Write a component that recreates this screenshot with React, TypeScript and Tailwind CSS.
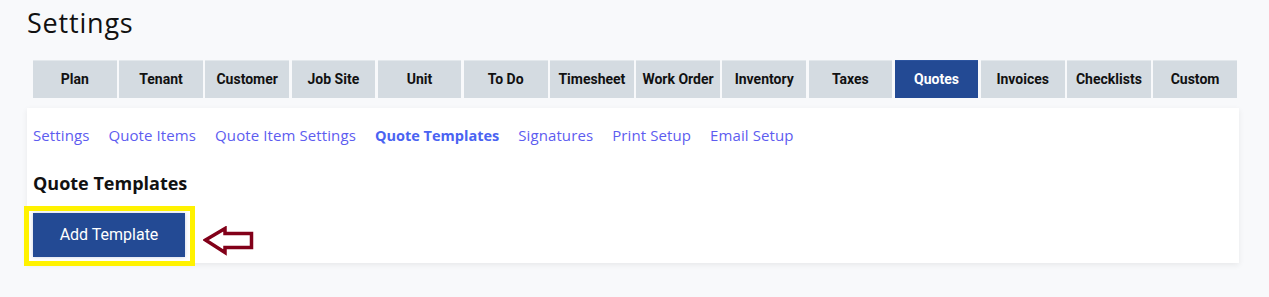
import React from "react";

const tabs = [
  "Plan",
  "Tenant",
  "Customer",
  "Job Site",
  "Unit",
  "To Do",
  "Timesheet",
  "Work Order",
  "Inventory",
  "Taxes",
  "Quotes",
  "Invoices",
  "Checklists",
  "Custom",
];

const links = [
  "Settings",
  "Quote Items",
  "Quote Item Settings",
  "Quote Templates",
  "Signatures",
  "Print Setup",
  "Email Setup",
];

export default function App() {
  return (
    <div className="min-h-[297px] w-full bg-[#f8f9fb] pl-[27px] pr-[30px] pt-[4px] font-['Open_Sans',sans-serif]">
      <h1 className="h-[38px] text-[27px] font-medium leading-[38px] tracking-[0.8px] text-[#111]">
        Settings
      </h1>
      <div className="ml-[6px] mr-[2px] mt-[18px] flex gap-[2.5px]">
        {tabs.map((t) => (
          <div
            key={t}
            className={
              t === "Quotes"
                ? "flex h-[38px] flex-1 items-center justify-center border-t border-[#2d55a0] bg-[#234a94] font-['Roboto',sans-serif] text-[14px] font-bold text-white"
                : "flex h-[38px] flex-1 items-center justify-center border-t border-[#e3e8ec] bg-[#d4dbe1] font-['Roboto',sans-serif] text-[14px] font-bold text-[#111]"
            }
          >
            {t}
          </div>
        ))}
      </div>
      <div className="mt-[10px] h-[155px] bg-white px-[6px] pt-[18px] shadow-[0_2px_6px_rgba(0,0,0,0.07)]">
        <div className="flex h-[18px] items-baseline gap-[19px] text-[15px] leading-[18px]">
          {links.map((l) => (
            <span
              key={l}
              className={
                l === "Quote Templates"
                  ? "text-[14.5px] font-bold text-[#4a63f2]"
                  : "tracking-[0.1px] text-[#5d5cf0]"
              }
            >
              {l}
            </span>
          ))}
        </div>
        <h2 className="mt-[27px] h-[24px] text-[18px] font-bold leading-[24px] text-[#111]">
          Quote Templates
        </h2>
        <div className="mt-[18px] flex items-center">
          <div className="relative">
            <button className="h-[44px] w-[152px] bg-[#234a94] font-['Roboto',sans-serif] text-[16px] font-normal text-white shadow-[0_0_4px_rgba(35,74,148,0.25)]">
              Add Template
            </button>
            <div className="pointer-events-none absolute -bottom-[9px] -left-[9px] -right-[10px] -top-[7px] border-[5px] border-[#fff200]" />
          </div>
          <svg
            width="52"
            height="30"
            viewBox="0 0 52 30"
            className="ml-[18px] mt-[12px]"
          >
            <polygon
              points="2.5,14 22,2.5 22,7.5 48.5,7.5 48.5,21.5 22,21.5 22,26.5"
              fill="none"
              stroke="#820019"
              strokeWidth="3.5"
              strokeLinejoin="miter"
            />
          </svg>
        </div>
      </div>
    </div>
  );
}
